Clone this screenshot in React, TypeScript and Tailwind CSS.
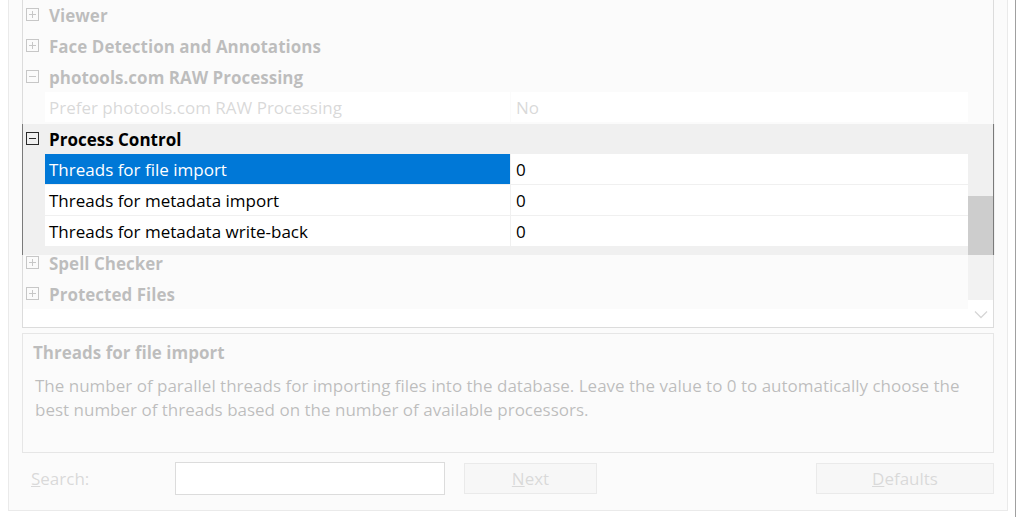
import React from "react"

type Row =
  | { kind: "cat"; label: string; open: boolean }
  | { kind: "prop"; label: string; value: string; selected?: boolean; dim?: boolean }

const rows: Row[] = [
  { kind: "cat", label: "Viewer", open: false },
  { kind: "cat", label: "Face Detection and Annotations", open: false },
  { kind: "cat", label: "photools.com RAW Processing", open: true },
  { kind: "prop", label: "Prefer photools.com RAW Processing", value: "No", dim: true },
  { kind: "cat", label: "Process Control", open: true },
  { kind: "prop", label: "Threads for file import", value: "0", selected: true },
  { kind: "prop", label: "Threads for metadata import", value: "0" },
  { kind: "prop", label: "Threads for metadata write-back", value: "0" },
  { kind: "cat", label: "Spell Checker", open: false },
  { kind: "cat", label: "Protected Files", open: false },
]

function ExpandBox({ open }: { open: boolean }) {
  return (
    <svg width="13" height="13" viewBox="0 0 13 13" className="block">
      <rect x="0.5" y="0.5" width="12" height="12" fill="none" stroke="#2a2a2a" />
      <line x1="3" y1="6.5" x2="10" y2="6.5" stroke="#2a2a2a" />
      {!open && <line x1="6.5" y1="3" x2="6.5" y2="10" stroke="#2a2a2a" />}
    </svg>
  )
}

function GridRow({ row }: { row: Row }) {
  if (row.kind === "cat") {
    return (
      <div className="h-[31px] shrink-0 flex items-center bg-[#f0f0f0]">
        <div className="pl-[3px]">
          <ExpandBox open={row.open} />
        </div>
        <span className="ml-[10px] pt-[2px] font-bold">{row.label}</span>
      </div>
    )
  }
  return (
    <div className="h-[31px] shrink-0 flex border-b border-[#f0f0f0]">
      <div className="w-[22px] bg-[#f0f0f0]" />
      <div
        className={`w-[466px] pl-[4px] pt-[2px] flex items-center border-r border-[#f0f0f0] ${
          row.selected ? "bg-[#0078d7] text-white" : row.dim ? "text-[#6d6d6d]" : ""
        }`}
      >
        {row.label}
      </div>
      <div className={`flex-1 pl-[5px] pt-[2px] flex items-center ${row.dim ? "text-[#6d6d6d]" : ""}`}>
        {row.value}
      </div>
    </div>
  )
}

export default function App() {
  return (
    <div className="relative w-[1016px] h-[517px] overflow-hidden bg-white border-r border-[#a0a0a0] font-['Open_Sans',sans-serif] text-[17px] text-black">
      <div className="ml-[8px] w-[1000px] h-[513px] border-l border-r border-b border-[#adadad] bg-[#f0f0f0] px-[13px]">
        {/* property grid */}
        <div className="-mt-[2px] h-[330px] flex border border-[#7a7a7a] bg-white">
          <div className="w-[945px] flex flex-col">
            {rows.map((r) => (
              <GridRow key={r.label} row={r} />
            ))}
          </div>
          <div className="w-[25px] flex flex-col bg-[#f0f0f0]">
            <div className="h-[197px]" />
            <div className="h-[104px] bg-[#cdcdcd]" />
            <div className="flex-1 bg-white flex items-center justify-center pt-[2px]">
              <svg width="14" height="9" viewBox="0 0 14 9">
                <polyline points="1,1.5 7,7.5 13,1.5" fill="none" stroke="#606060" strokeWidth="1.3" />
              </svg>
            </div>
          </div>
        </div>

        {/* description */}
        <div className="mt-[5px] h-[120px] border border-[#a0a0a0] px-[10px] pt-[8px]">
          <div className="font-bold leading-[22px]">Threads for file import</div>
          <p className="mt-[10px] pl-[2px] leading-[24px]">
            The number of parallel threads for importing files into the database. Leave the value to 0 to automatically choose the best number of threads based on the number of available processors.
          </p>
        </div>

        {/* search bar */}
        <div className="mt-[9px] flex items-center">
          <div className="w-[153px] pl-[9px] text-[#6d6d6d]">
            <span className="underline">S</span>earch:
          </div>
          <div className="w-[270px] h-[33px] border border-[#7a7a7a] bg-white" />
          <button className="ml-[19px] w-[133px] h-[31px] border border-[#adadad] bg-[#e1e1e1] text-[#6d6d6d]">
            <span className="underline">N</span>ext
          </button>
          <button className="ml-auto w-[178px] h-[31px] border border-[#adadad] bg-[#e1e1e1] text-[#6d6d6d]">
            <span className="underline">D</span>efaults
          </button>
        </div>
      </div>

      {/* spotlight */}
      <div className="pointer-events-none absolute left-[22px] top-[124px] w-[973px] h-[131px] shadow-[0_0_0_1500px_rgba(255,255,255,0.74)]" />
    </div>
  )
}
